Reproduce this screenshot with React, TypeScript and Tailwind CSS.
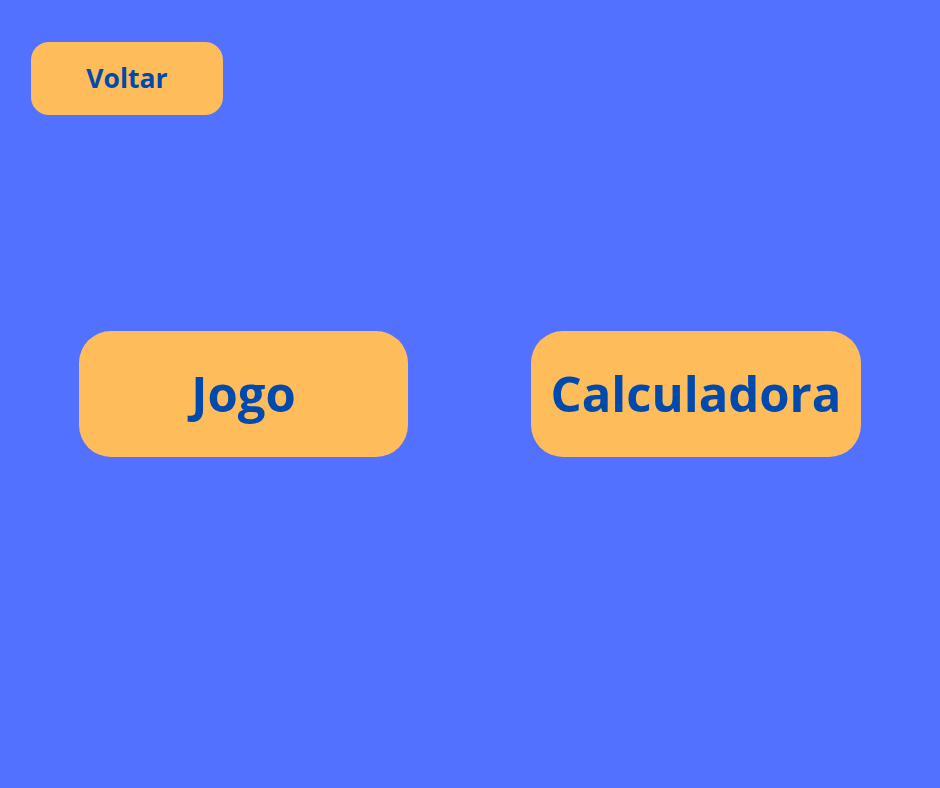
export default function App() {
  return (
    <div
      className="min-h-[788px] w-full bg-[#5271ff] flex flex-col"
      style={{ fontFamily: '"Open Sans", "Liberation Sans", sans-serif' }}
    >
      {/* Top bar */}
      <div className="pt-[42px] pl-[31px]">
        <button className="w-[192px] h-[73px] rounded-[18px] bg-[#ffbc5b] text-[#004aad] text-[26.5px] font-bold flex items-center justify-center">
          Voltar
        </button>
      </div>

      {/* Menu */}
      <div className="mt-[216px] px-[79px] flex justify-between">
        <button className="w-[329px] h-[126px] rounded-[32px] bg-[#ffbc5b] text-[#004aad] text-[49px] font-bold flex items-center justify-center">
          Jogo
        </button>
        <button className="w-[330px] h-[126px] rounded-[32px] bg-[#ffbc5b] text-[#004aad] text-[49px] font-bold flex items-center justify-center">
          Calculadora
        </button>
      </div>
    </div>
  );
}
